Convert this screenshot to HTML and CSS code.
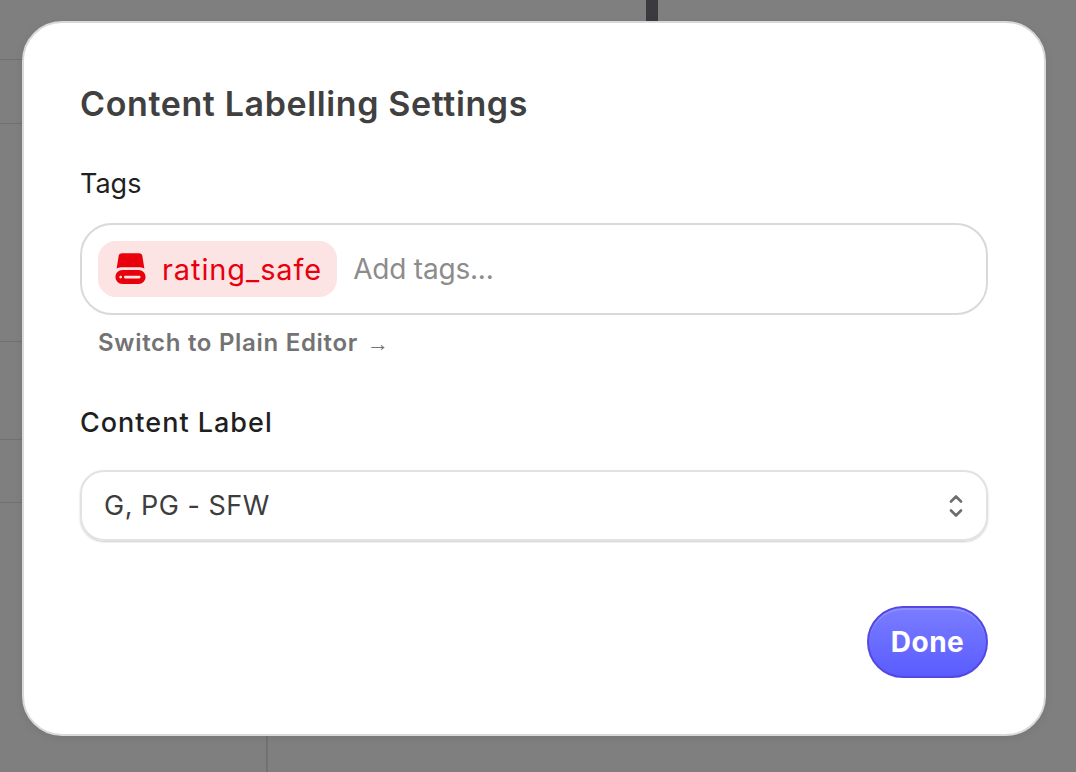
FILE: index.html
```html
<!DOCTYPE html>
<html lang="en">
<head>
    <meta charset="UTF-8">
    <meta name="viewport" content="width=device-width, initial-scale=1.0">
    <title>Content Labelling Settings</title>
    <link rel="stylesheet" href="styles.css">
</head>
<body>
    <div class="backdrop">
        <div class="back-line line-1"></div>
        <div class="back-line line-2"></div>
        <div class="back-line line-3"></div>
        <div class="back-line line-4"></div>
        <div class="back-line line-5"></div>
        <div class="back-divider"></div>
        <div class="back-handle"></div>
    </div>

    <div class="modal">
        <h1 class="modal-title">Content Labelling Settings</h1>

        <label class="field-label tags-label">Tags</label>
        <div class="tag-box">
            <span class="tag">
                <svg class="tag-icon" viewBox="0 0 32 32" width="37" height="37">
                    <path fill="currentColor" d="M8.500 2h15c1.400 0 2.400.8 2.700 2L28 15.200c-1.600-.8-3.300-1.100-5-1.100H9c-1.700 0-3.400.3-5 1.100L5.800 4C6.100 2.800 7.100 2 8.500 2z"/>
                    <path fill="currentColor" fill-rule="evenodd" d="M9 16.500h14c3.300 0 6 2.700 6 6s-2.700 6-6 6H9c-3.300 0-6-2.700-6-6s2.700-6 6-6zM11.500 21.300c-.7 0-1.200.5-1.200 1.200s.5 1.200 1.200 1.200h12c.7 0 1.200-.5 1.200-1.200s-.5-1.200-1.200-1.200zM7.500 21.300c-.7 0-1.200.5-1.200 1.200s.5 1.200 1.200 1.200 1.200-.5 1.200-1.200-.5-1.200-1.200-1.200z"/>
                </svg>
                <span class="tag-text">rating_safe</span>
            </span>
            <span class="tag-placeholder">Add tags...</span>
        </div>
        <a class="switch-link">Switch to Plain Editor<span class="switch-arrow">→</span></a>

        <label class="field-label content-label">Content Label</label>
        <div class="select-box">
            <span class="select-value">G, PG - SFW</span>
            <svg class="select-arrows" viewBox="0 0 14 24" width="14" height="24">
                <path d="M2 7.500l5-5 5 5M2 16.500l5 5 5-5" fill="none" stroke="currentColor" stroke-width="2.600" stroke-linecap="round" stroke-linejoin="round"/>
            </svg>
        </div>

        <div class="modal-footer">
            <button class="done-btn">Done</button>
        </div>
    </div>
</body>
</html>
```

FILE: styles.css
```css
* {
    margin: 0;
    padding: 0;
    box-sizing: border-box;
}

html, body {
    height: 772px;
    overflow: hidden;
}

body {
    position: relative;
    background-color: #7f7f7f;
    font-family: "Inter", "Open Sans", sans-serif;
    padding: 21px 0 0 22px;
}

.backdrop {
    position: absolute;
    top: 0;
    left: 0;
    width: 100%;
    height: 100%;
}

.back-line {
    position: absolute;
    left: 0;
    width: 24px;
    height: 1px;
    background-color: #717171;
}

.line-1 { top: 59px; }
.line-2 { top: 123px; }
.line-3 { top: 341px; }
.line-4 { top: 439px; }
.line-5 { top: 502px; }

.back-divider {
    position: absolute;
    left: 266px;
    top: 730px;
    width: 2px;
    height: 42px;
    background-color: #717171;
}

.back-handle {
    position: absolute;
    left: 646px;
    top: 0;
    width: 12px;
    height: 24px;
    background-color: #3a3a3f;
}

.modal {
    position: relative;
    width: 1024px;
    height: 715px;
    background: white;
    border: 2px solid #d9d9d9;
    border-radius: 40px;
    padding: 56px 56px 0;
    box-shadow: 0 2px 8px rgba(0,0,0,0.08);
}

.modal-title {
    color: #404040;
    font-size: 34px;
    font-weight: 600;
    line-height: 50px;
    letter-spacing: 0.62px;
}

.field-label {
    display: block;
    color: #1f1f1f;
    line-height: 36px;
}

.tags-label {
    font-size: 27px;
    font-weight: 400;
    margin-top: 37px;
}

.tag-box {
    display: flex;
    align-items: center;
    gap: 16px;
    height: 92px;
    margin-top: 21px;
    padding: 0 16px;
    border: 2px solid #d9d9d9;
    border-radius: 32px;
}

.tag {
    display: flex;
    align-items: center;
    gap: 13px;
    height: 56px;
    padding: 0 15px 0 14px;
    background-color: #fce4e5;
    border-radius: 18px;
    color: #e8000d;
}

.tag-icon {
    display: block;
}

.tag-text {
    font-size: 29px;
    letter-spacing: 0.9px;
}

.tag-placeholder {
    color: #8c8c8c;
    font-size: 28px;
    letter-spacing: -0.2px;
}

.switch-link {
    display: block;
    margin: 10px 0 0 18px;
    color: #737373;
    font-size: 24px;
    font-weight: 600;
    line-height: 36px;
    letter-spacing: 0.7px;
}

.switch-arrow {
    margin-left: 9px;
    font-family: "Liberation Sans", sans-serif;
    font-weight: 400;
    font-size: 22px;
}

.content-label {
    font-size: 27px;
    font-weight: 500;
    letter-spacing: 1px;
    margin-top: 43px;
}

.select-box {
    display: flex;
    align-items: center;
    justify-content: space-between;
    height: 71px;
    margin-top: 29px;
    padding: 0 23px 0 22px;
    border: 2px solid #e2e2e2;
    border-radius: 24px;
    box-shadow: 0 1px 2px rgba(0,0,0,0.2);
}

.select-value {
    color: #3d3d3d;
    font-size: 27px;
    letter-spacing: 0.5px;
}

.select-arrows {
    color: #6e6e6e;
}

.modal-footer {
    display: flex;
    justify-content: flex-end;
    margin-top: 65px;
}

.done-btn {
    width: 121px;
    height: 72px;
    color: white;
    background: linear-gradient(#7a7dff, #5a5cff);
    border: 2px solid #5548e0;
    border-radius: 36px;
    box-shadow: inset 0 2px 0 rgba(255,255,255,0.15);
    font-family: "Inter", sans-serif;
    font-size: 28px;
    font-weight: 700;
    letter-spacing: 0.5px;
}
```
